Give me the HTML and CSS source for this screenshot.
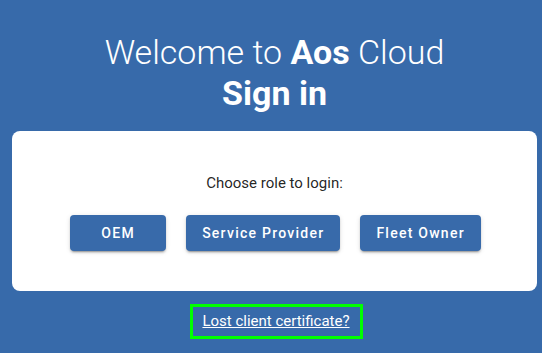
FILE: index.html
```html
<!DOCTYPE html>
<html lang="en">
<head>
<meta charset="utf-8">
<title>Aos Cloud - Sign in</title>
<link rel="stylesheet" href="styles.css">
</head>
<body>
<main class="page">
  <h1 class="title">Welcome to <b>Aos</b> Cloud<br><b>Sign in</b></h1>
  <section class="card">
    <p class="prompt">Choose role to login:</p>
    <div class="roles">
      <button class="role-btn" type="button">OEM</button>
      <button class="role-btn" type="button">Service Provider</button>
      <button class="role-btn" type="button">Fleet Owner</button>
    </div>
  </section>
  <div class="lost">
    <a class="lost-link" href="#">Lost client certificate?</a>
  </div>
</main>
</body>
</html>
```
FILE: styles.css
```css
html, body {
  margin: 0;
  padding: 0;
  height: 100%;
}
body {
  background: #376aaa;
  font-family: Roboto, "Liberation Sans", Arial, sans-serif;
  color: #fff;
}
.page {
  padding: 32px 5px 0 12px;
  display: flex;
  flex-direction: column;
  align-items: stretch;
}
.title {
  margin: 0 0 17px;
  font-size: 34px;
  font-weight: 300;
  line-height: 41px;
  text-align: center;
  color: #fff;
}
.title b {
  font-weight: 700;
}
.card {
  background: #fff;
  border-radius: 8px;
  padding: 41px 16px 0;
  display: flex;
  flex-direction: column;
  align-items: center;
  height: 160px;
  box-sizing: border-box;
}
.prompt {
  margin: 0 0 21px;
  font-size: 15px;
  line-height: 22px;
  color: rgba(0,0,0,0.87);
}
.roles {
  display: flex;
  gap: 20px;
  justify-content: center;
  padding-left: 2px;
}
.role-btn {
  min-width: 96px;
  height: 36px;
  padding: 0 16px;
  border: none;
  border-radius: 4px;
  background: #386aaa;
  color: #fff;
  font-family: Roboto, "Liberation Sans", Arial, sans-serif;
  font-size: 14px;
  font-weight: 500;
  letter-spacing: 1.25px;
  box-shadow: 0 3px 1px -2px rgba(0,0,0,0.2), 0 2px 2px 0 rgba(0,0,0,0.14), 0 1px 5px 0 rgba(0,0,0,0.12);
  cursor: pointer;
}
.lost {
  display: flex;
  justify-content: center;
  margin-top: 13px;
  padding-left: 4px;
}
.lost-link {
  display: inline-block;
  color: #fff;
  font-size: 15px;
  line-height: 29px;
  padding: 0 10px 0 9px;
  border: 3px solid #00ff00;
  text-decoration: underline;
}
```
